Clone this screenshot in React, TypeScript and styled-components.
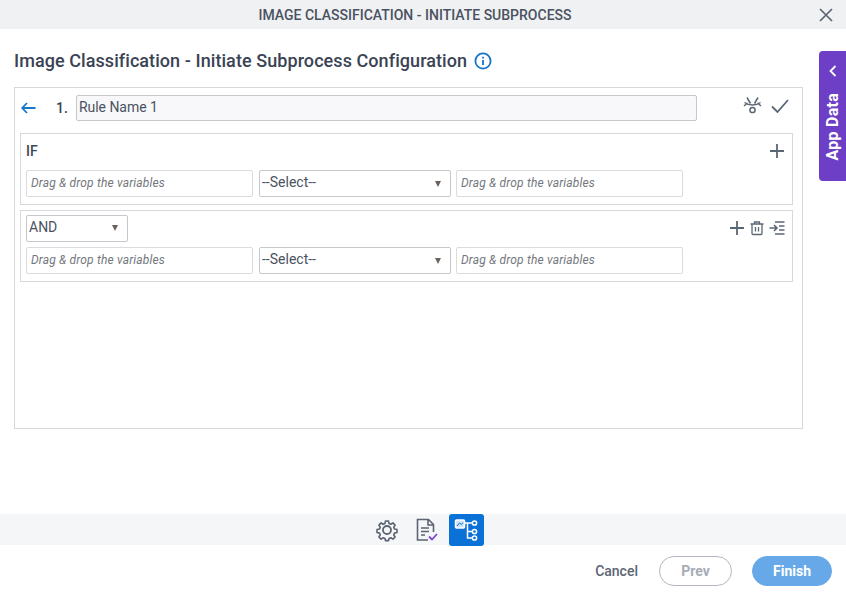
import React from "react";
import styled, { createGlobalStyle } from "styled-components";

const GlobalStyle = createGlobalStyle`
  html, body {
    margin: 0;
    padding: 0;
    background: #fff;
  }
  body {
    font-family: Roboto, "Liberation Sans", sans-serif;
  }
  * {
    box-sizing: border-box;
  }
`;

const Page = styled.div`
  position: relative;
  width: 846px;
  height: 596px;
  display: flex;
  flex-direction: column;
  overflow: hidden;
  background: #fff;
`;

const TitleBar = styled.header`
  position: relative;
  flex: none;
  height: 29px;
  background: #f0f1f3;
  display: flex;
  align-items: center;
  justify-content: center;
  padding-right: 16px;
  font-size: 14px;
  font-weight: 500;
  line-height: 30px;
  color: #4a5261;
`;

const CloseButton = styled.button`
  position: absolute;
  right: 13px;
  top: 8px;
  width: 14px;
  height: 14px;
  padding: 0;
  border: 0;
  background: none;
  color: #5b6472;
  display: flex;
`;

const Main = styled.main`
  flex: 1;
  min-height: 0;
  padding: 19px 43px 0 14px;
`;

const Heading = styled.h1`
  margin: 0 0 14px;
  height: 25px;
  display: flex;
  align-items: center;
  gap: 7px;
  font-size: 18px;
  font-weight: 500;
  letter-spacing: 0.07px;
  color: #3a4354;
  white-space: nowrap;
`;

const AppDataTab = styled.aside`
  position: absolute;
  right: 0;
  top: 51px;
  width: 27px;
  height: 130px;
  background: #6c3fc6;
  border-radius: 4px 0 0 4px;
  color: #fff;
  display: flex;
  flex-direction: column;
  align-items: center;
  padding-top: 14px;
  gap: 16px;
`;

const AppDataLabel = styled.span`
  writing-mode: vertical-rl;
  transform: rotate(180deg);
  font-size: 16px;
  font-weight: 700;
  letter-spacing: 0.25px;
  line-height: 27px;
  white-space: nowrap;
`;

const RulePanel = styled.section`
  height: 342px;
  border: 1px solid #d6d8db;
  padding: 6px 9px 0 5px;
`;

const RuleHeader = styled.div`
  display: flex;
  align-items: center;
  height: 27px;
  margin-bottom: 12px;
`;

const BackButton = styled.span`
  width: 15px;
  margin-left: 1px;
  display: flex;
  color: #1577c8;
`;

const RuleNumber = styled.span`
  width: 20px;
  margin-left: 20px;
  font-size: 14px;
  font-weight: 500;
  color: #3a4354;
`;

const RuleNameInput = styled.div`
  width: 621px;
  height: 26px;
  border: 1px solid #c4c7cb;
  border-radius: 2px;
  background: #f8f8fa;
  padding-left: 2px;
  font-size: 14px;
  letter-spacing: -0.05px;
  line-height: 23px;
  color: #4a5261;
`;

const RuleActions = styled.div`
  margin: -3px 0 0 46px;
  display: flex;
  align-items: center;
  gap: 9px;
  color: #5b6675;
`;

const ConditionBox = styled.div`
  height: 72px;
  border: 1px solid #d6d8db;
  padding: 4px 7px 0 5px;
  margin-bottom: 5px;
`;

const ConditionTop = styled.div`
  height: 26px;
  margin-bottom: 6px;
  display: flex;
  align-items: center;
  justify-content: space-between;
`;

const IfLabel = styled.span`
  font-size: 14px;
  font-weight: 500;
  color: #3f4756;
`;

const ConditionActions = styled.div`
  display: flex;
  align-items: center;
  gap: 4px;
  color: #5b6675;
`;

const ConditionRow = styled.div`
  display: flex;
  gap: 6px;
`;

const DropField = styled.div<{ $tight?: boolean }>`
  width: 227px;
  height: 27px;
  margin-left: ${(p) => (p.$tight ? -1 : 0)}px;
  border: 1px solid #d9dbde;
  border-radius: 2px;
  padding-left: 4px;
  font-size: 12px;
  font-style: italic;
  letter-spacing: 0.17px;
  line-height: 25px;
  color: #73777d;
`;

const SelectBox = styled.div<{ $width: number }>`
  width: ${(p) => p.$width}px;
  height: 27px;
  border: 1px solid #c4c7cb;
  border-radius: 2px;
  padding: 0 9px 0 1px;
  display: flex;
  align-items: center;
  justify-content: space-between;
  font-size: 14px;
  line-height: 23px;
  color: #4a5261;
`;

const SelectText = styled.span`
  margin: -2px 0 0 1px;
`;

const Caret = styled.i`
  width: 0;
  height: 0;
  border-left: 3.5px solid transparent;
  border-right: 3.5px solid transparent;
  border-top: 6px solid #6b625c;
`;

const ToolStrip = styled.div`
  flex: none;
  height: 31px;
  background: #f5f6f8;
  display: flex;
  align-items: flex-start;
  justify-content: center;
  padding-left: 4px;
`;

const ToolButton = styled.span<{ $active?: boolean }>`
  width: 35px;
  height: 32px;
  margin-left: 4px;
  border-radius: 3px;
  display: flex;
  align-items: center;
  justify-content: center;
  background: ${(p) => (p.$active ? "#0a72d6" : "transparent")};
  color: ${(p) => (p.$active ? "#fff" : "#5b6472")};
`;

const Footer = styled.footer`
  flex: none;
  height: 51px;
  display: flex;
  align-items: center;
  justify-content: flex-end;
  padding: 0 14px 0 0;
`;

const CancelButton = styled.span`
  margin-right: 21px;
  font-size: 14px;
  font-weight: 500;
  color: #5b6472;
`;

const PillButton = styled.span<{ $primary?: boolean }>`
  height: 30px;
  width: ${(p) => (p.$primary ? 80 : 73)}px;
  margin-left: ${(p) => (p.$primary ? 20 : 0)}px;
  border-radius: 15px;
  display: flex;
  align-items: center;
  justify-content: center;
  font-size: 14px;
  font-weight: 700;
  border: 1px solid ${(p) => (p.$primary ? "#67a9e8" : "#b3b8c0")};
  background: ${(p) => (p.$primary ? "#67a9e8" : "#fff")};
  color: ${(p) => (p.$primary ? "#fff" : "#a6acb6")};
`;

function PlusIcon() {
  return (
    <svg width="16" height="16" viewBox="0 0 16 16" fill="none" stroke="currentColor" strokeWidth="1.8">
      <path d="M8 1v14M1 8h14" />
    </svg>
  );
}

function TrashIcon() {
  return (
    <svg width="16" height="16" viewBox="0 0 16 16" fill="none" stroke="currentColor" strokeWidth="1.3">
      <path d="M1.5 4h13M5.5 4V2h5v2M3 4v9.500a1 1 0 0 0 1 1h8a1 1 0 0 0 1-1V4M6.500 7v4.500M9.500 7v4.500" />
    </svg>
  );
}

function OutdentIcon() {
  return (
    <svg width="16" height="16" viewBox="0 0 16 16" fill="none" stroke="currentColor" strokeWidth="1.6">
      <path d="M6 2h9.500M10 6h5.500M10 10h5.500M6 14h9.500M0.500 8h7M5 5l3 3-3 3" />
    </svg>
  );
}

function DropRow() {
  return (
    <ConditionRow>
      <DropField>Drag &amp; drop the variables</DropField>
      <SelectBox $width={192}>
        <SelectText>--Select--</SelectText>
        <Caret />
      </SelectBox>
      <DropField $tight>Drag &amp; drop the variables</DropField>
    </ConditionRow>
  );
}

export default function App() {
  return (
    <Page>
      <GlobalStyle />
      <TitleBar>
        IMAGE CLASSIFICATION - INITIATE SUBPROCESS
        <CloseButton>
          <svg width="14" height="14" viewBox="0 0 14 14" fill="none" stroke="currentColor" strokeWidth="1.7">
            <path d="M1 1l12 12M13 1L1 13" />
          </svg>
        </CloseButton>
      </TitleBar>
      <Main>
        <Heading>
          Image Classification - Initiate Subprocess Configuration
          <svg width="18" height="18" viewBox="0 0 18 18" fill="none" stroke="#1577c8" strokeWidth="1.8">
            <circle cx="9" cy="9" r="7.6" />
            <path d="M9 8v5M9 4.800v1.800" />
          </svg>
        </Heading>
        <RulePanel>
          <RuleHeader>
            <BackButton>
              <svg width="15" height="12" viewBox="0 0 15 12" fill="none" stroke="currentColor" strokeWidth="1.8">
                <path d="M14.500 6H1.500M6 1L1.200 6 6 11" />
              </svg>
            </BackButton>
            <RuleNumber>1.</RuleNumber>
            <RuleNameInput>Rule Name 1</RuleNameInput>
            <RuleActions>
              <svg width="19" height="18" viewBox="0 1 19 18" fill="none" stroke="currentColor" strokeWidth="1.5">
                <path d="M1.500 6.500c2.200 1.600 5 2.400 8 2.400s5.800-.8 8-2.400M4 1.500l3.500 6M15 1.500l-3.500 6M1 10l3.500-3M18 10l-3.500-3" />
                <circle cx="9.500" cy="14" r="2.600" />
              </svg>
              <svg width="18" height="14" viewBox="0 0 18 14" fill="none" stroke="currentColor" strokeWidth="1.8">
                <path d="M1 7.500L6.500 13 17 1" />
              </svg>
            </RuleActions>
          </RuleHeader>
          <ConditionBox>
            <ConditionTop>
              <IfLabel>IF</IfLabel>
              <ConditionActions>
                <PlusIcon />
              </ConditionActions>
            </ConditionTop>
            <DropRow />
          </ConditionBox>
          <ConditionBox>
            <ConditionTop>
              <SelectBox $width={102}>
                <SelectText>AND</SelectText>
                <Caret />
              </SelectBox>
              <ConditionActions>
                <PlusIcon />
                <TrashIcon />
                <OutdentIcon />
              </ConditionActions>
            </ConditionTop>
            <DropRow />
          </ConditionBox>
        </RulePanel>
      </Main>
      <AppDataTab>
        <svg width="10" height="12" viewBox="0 0 10 12" fill="none" stroke="currentColor" strokeWidth="1.8">
          <path d="M7.500 1L2.500 6l5 5" />
        </svg>
        <AppDataLabel>App Data</AppDataLabel>
      </AppDataTab>
      <ToolStrip>
        <ToolButton>
          <svg width="24" height="24" viewBox="1 0.5 24 24" fill="none" stroke="currentColor" strokeWidth="1.8" strokeLinejoin="round">
            <path d="M10.300 2.500h3.400l.6 2.800 1.900.8 2.400-1.500 2.400 2.400-1.500 2.400.8 1.900 2.800.6v3.400l-2.800.6-.8 1.900 1.500 2.400-2.400 2.400-2.400-1.500-1.900.8-.6 2.300h-3.400l-.6-2.300-1.900-.8-2.400 1.500-2.400-2.400 1.500-2.400-.8-1.900-2.800-.6v-3.400l2.800-.6.8-1.900-1.500-2.400 2.400-2.400 2.400 1.500 1.900-.8z" transform="translate(1.200 1.300) scale(.9)" />
            <circle cx="12" cy="12.500" r="4" />
          </svg>
        </ToolButton>
        <ToolButton>
          <svg width="24" height="24" viewBox="1 0 24 24" fill="none" stroke="currentColor" strokeWidth="1.600">
            <path d="M14 22H3.500V1.500h11l5 5V14M14 1.500V7h5.500M7 10h8M7 13.500h8M7 17h4" />
            <path d="M15 18.500l3 3 5-5.500" stroke="#7b45d0" strokeWidth="1.800" />
          </svg>
        </ToolButton>
        <ToolButton $active>
          <svg width="24" height="24" viewBox="0 0 24 24" fill="none" stroke="currentColor" strokeWidth="1.500">
            <rect x="1.500" y="2" width="9" height="8" rx="1" fill="#cfe3f7" />
            <path d="M3 8l2.500-3 2 1.500L9 4.500" stroke="#0a72d6" strokeWidth="1" />
            <path d="M10.500 5h8M13.500 5v15h5M13.500 13.500h5" />
            <circle cx="20.500" cy="5" r="2.100" />
            <circle cx="20.500" cy="13.500" r="2.100" />
            <circle cx="20.500" cy="20" r="2.100" />
          </svg>
        </ToolButton>
      </ToolStrip>
      <Footer>
        <CancelButton>Cancel</CancelButton>
        <PillButton>Prev</PillButton>
        <PillButton $primary>Finish</PillButton>
      </Footer>
    </Page>
  );
}
